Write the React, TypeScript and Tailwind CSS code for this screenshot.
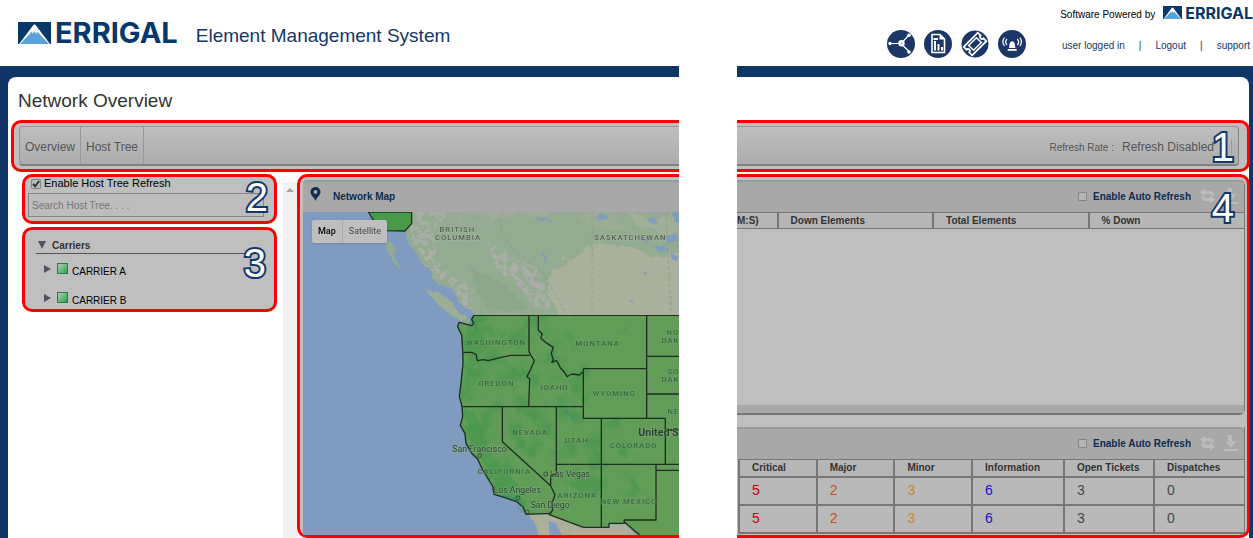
import { useState } from 'react';

interface Carrier {
  name: string;
}

interface AlarmRow {
  critical: number;
  major: number;
  minor: number;
  information: number;
  tickets: number;
  dispatches: number;
}

const carriers: Carrier[] = [{ name: 'CARRIER A' }, { name: 'CARRIER B' }];

const alarmRows: AlarmRow[] = [
  { critical: 5, major: 2, minor: 3, information: 6, tickets: 3, dispatches: 0 },
  { critical: 5, major: 2, minor: 3, information: 6, tickets: 3, dispatches: 0 },
];

function MountainMark({ className }: { className: string }) {
  return (
    <svg className={className} viewBox="0 0 33 22" preserveAspectRatio="none" aria-hidden="true">
      <rect width="33" height="22" fill="#06386b" />
      <path d="M1 22 L15 3.5 Q16.5 1.5 18 3.5 L32 22Z" fill="#fff" />
      <path d="M2 22 L12 11.5 L14 9.5 L14.6 12 L16.5 9 L18.2 12.2 L19 9.5 L21 11.5 L31 22Z" fill="#57a3d9" />
    </svg>
  );
}

function NetworkIcon() {
  return (
    <svg className="size-7" viewBox="0 0 28 28" aria-hidden="true">
      <circle cx="14" cy="14" r="14" fill="#1b3766" />
      <path d="M3 13.5H12M15.5 12L21.5 5.5M15.5 15L22 21.5" stroke="#fff" strokeWidth="1.2" fill="none" />
      <circle cx="14.5" cy="13.3" r="3.2" fill="#fff" />
      <circle cx="14.5" cy="13.3" r="1" fill="#9fb0c9" />
      <circle cx="3" cy="13.5" r="1.7" fill="#fff" />
      <circle cx="22" cy="5.2" r="1.8" fill="#fff" />
      <circle cx="22" cy="22" r="1.8" fill="#fff" />
    </svg>
  );
}

function ReportIcon() {
  return (
    <svg className="size-7" viewBox="0 0 28 28" aria-hidden="true">
      <circle cx="14" cy="14" r="14" fill="#1b3766" />
      <path d="M8 4.5h8l4.500 4.500V22.500H8z" fill="none" stroke="#fff" strokeWidth="1.6" />
      <path d="M15.500 4v5.500H21z" fill="#fff" />
      <path d="M9.500 9H14M11 20.500V11M14.500 20.500V14M18 20.500V17" stroke="#fff" strokeWidth="2" fill="none" />
    </svg>
  );
}

function TicketIcon() {
  return (
    <svg className="size-7" viewBox="0 0 28 28" aria-hidden="true">
      <circle cx="14" cy="14" r="13.5" fill="#1b3766" />
      <g transform="rotate(-45 14 14)" fill="none" stroke="#fff">
        <path d="M4 8h20v4a2 2 0 0 0 0 4v4H4v-4a2 2 0 0 0 0-4z" strokeWidth="1.8" />
        <rect x="8.5" y="10.5" width="11" height="7" strokeWidth="1.4" />
      </g>
    </svg>
  );
}

function AlarmIcon() {
  return (
    <svg className="size-7" viewBox="0 0 28 28" aria-hidden="true">
      <circle cx="14" cy="14" r="14" fill="#1b3766" />
      <path d="M11 18l.8-5a2.500 2.500 0 0 1 4.800 0l.8 5zM9.700 19h9v1.800h-9z" fill="#fff" />
      <g fill="none" stroke="#fff" strokeWidth="1.2">
        <path d="M9 9a4.500 4.500 0 0 0 0 6M6.500 7.500a7 7 0 0 0 0 8.500M19.300 9a4.500 4.500 0 0 1 0 6M21.800 7.500a7 7 0 0 1 0 8.500" />
      </g>
    </svg>
  );
}

function RefreshIcon() {
  return (
    <svg className="h-4 w-[15px]" viewBox="0 0 15 16" aria-hidden="true">
      <path d="M4 4.500H9q3 0 3.500 3M11 11.500H6q-3 0-3.500-3" fill="none" stroke="#bcbcbc" strokeWidth="3" />
      <path d="M0 4.500L5 .5v8zM15 11.500l-5-4v8z" fill="#bcbcbc" />
    </svg>
  );
}

function DownloadIcon() {
  return (
    <svg className="size-4" viewBox="0 0 16 16" fill="#bcbcbc" aria-hidden="true">
      <path d="M4 0h5v6h4.500L8 13 2 6.500h3.500zM1 14h14v2H1z" />
    </svg>
  );
}

function Callout({ n, className }: { n: number; className: string }) {
  return (
    <span
      className={`absolute z-20 text-[40px] leading-8 text-white [-webkit-text-stroke:4px_#12386b] [paint-order:stroke_fill] ${className}`}
    >
      {n}
    </span>
  );
}

function RegionMap() {
  return (
    <svg className="block h-[323px] w-full" viewBox="0 0 1128 969" preserveAspectRatio="xMinYMin slice" role="img" aria-label="Network map">
      <defs>
        <filter id="rough" x="-5%" y="-5%" width="110%" height="110%">
          <feTurbulence type="fractalNoise" baseFrequency="0.03" numOctaves="4" seed="4" />
          <feDisplacementMap in="SourceGraphic" scale="42" />
        </filter>
        <filter id="coast" x="-5%" y="-5%" width="110%" height="110%">
          <feTurbulence type="fractalNoise" baseFrequency="0.05" numOctaves="3" seed="9" />
          <feDisplacementMap in="SourceGraphic" scale="18" />
        </filter>
        <filter id="peaks" x="0" y="0" width="100%" height="100%" colorInterpolationFilters="sRGB">
          <feTurbulence type="fractalNoise" baseFrequency="0.06" numOctaves="4" seed="7" />
          <feColorMatrix values="0 0 0 0 .67  0 0 0 0 .68  0 0 0 0 .66  5 5 0 0 -4.5" />
          <feComposite in2="SourceGraphic" operator="in" />
        </filter>
        <filter id="forest" x="0" y="0" width="100%" height="100%" colorInterpolationFilters="sRGB">
          <feTurbulence type="fractalNoise" baseFrequency="0.018" numOctaves="4" seed="2" />
          <feColorMatrix values="0 0 0 0 .27  0 0 0 0 .58  0 0 0 0 .31  0 4 0 0 -1.8" />
          <feComposite in2="SourceGraphic" operator="in" />
        </filter>
      </defs>
      <rect width="1400" height="969" fill="#7f9bc0" />

      {/* Canada */}
      <g transform="translate(-39 -306)">
        <path
          filter="url(#coast)"
          d="M345 300L348 370L358 405L388 440L402 470L428 480L425 505L450 525L490 535L505 575L530 590L555 615L560 650H1500V280H345Z"
          fill="#93ac91"
        />
        <path filter="url(#coast)" d="M280 392L300 395L318 415L312 440L338 484L318 468L300 435Z" fill="#93ac91" />
        <path filter="url(#coast)" d="M408 540L440 545L485 575L520 600L545 632L530 640L490 620L445 585Z" fill="#9cad98" />
        <g filter="url(#rough)" fill="#a9b09b">
          <path d="M560 280H790L770 320L690 310L600 330Z" opacity=".5" />
          <path d="M790 480L850 440L930 400L1010 410L1090 440L1220 420V640H820L780 560Z" />
          <path d="M1020 310L1100 330L1200 300V400L1120 370L1040 350Z" opacity=".6" />
          <path d="M900 300L970 320L1000 350L940 360L860 330Z" opacity=".4" />
        </g>
        <path filter="url(#peaks)" d="M365 306H480L430 360L440 450L490 500L550 540L545 600L520 590L480 520L430 500L400 440L360 390Z" fill="#fff" />
        <path filter="url(#peaks)" d="M590 390L630 410L660 440L740 470L775 550L785 600L730 590L690 530L620 480Z" fill="#fff" />
        <path filter="url(#peaks)" d="M470 306H640L600 350L500 340Z" fill="#fff" opacity=".3" />
        <path filter="url(#rough)" d="M540 470L640 520L720 600H590L560 540Z" fill="#86a58a" opacity=".6" />
        <g fill="#7f9bc0" filter="url(#coast)">
          <path d="M740 325l40 2v6l-38-2zM755 420l12 22 4 28-8-20zM915 322l30-10 6 8-28 10zM1040 380l40 6-12 12zM1075 330l18-8 10 16-20 4zM1125 380l36-10v20l-28 8zM1150 306h20v34l-14-4zM1060 485l10 4-6 8z" />
          <path d="M1095 410l26-5 10 16-26 2zM1142 430l22 10v14l-18-6zM1015 566l10 4-4 6z" />
          <path d="M490 570l14 22 30 18 18 10-8 8-35-18-20-25z" />
        </g>
        <g stroke="#7d8a7c" strokeWidth="2" strokeDasharray="10 8" fill="none" opacity=".7">
          <path d="M634 306V370L680 430L760 490L800 560L830 612M907 306V612M1128 306L1143 612" />
        </g>
        <path d="M235 306L250 330L280 362L345 363L365 340V306Z" fill="#489a49" stroke="#1c3322" strokeWidth="4" />
      </g>

      <g transform="translate(-39 294)">
        {/* Mexico */}
        <path filter="url(#coast)" d="M712 610L780 610L880 652L1003 638L1050 690H820L800 640L775 635L780 700H755L740 650Z" fill="#aab09a" />
        {/* United States */}
        <path
          d="M552 16H1300V700H1060L1040 672L1003 636V640H957V652H880L778 614L782 610L708 613L700 592L680 575L635 560L612 553L608 528L578 480L563 448L545 430L528 400L525 370L511 346L518 320L516 290L508 260L513 220L519 160L518 122L515 75L503 50L507 37L545 47L551 40L545 28Z"
          fill="#629d58"
        />
        <path
          filter="url(#forest)"
          d="M552 16H820L900 190V320H1010V460L1060 560H900L720 460L640 400L620 300L708 613L612 553L578 480L528 400L511 346L516 290L508 260L518 122L507 37Z"
          fill="#fff"
          opacity=".6"
        />
        <path filter="url(#rough)" d="M525 300L560 310L580 400L640 480L700 540L700 590L630 540L570 440L535 380Z" fill="#4a9a50" opacity=".7" />
        <path filter="url(#rough)" d="M530 50L600 40L590 110L560 180L540 270L520 255L528 125Z" fill="#489950" opacity=".6" />
        <g stroke="#2b8780" strokeWidth="4" fill="none" opacity=".7">
          <path d="M826 300l8 10 12 18M556 30v20l8 10M640 556l40 12 18 14" />
          <path d="M985 70l20-10 12-12" strokeWidth="2" />
        </g>
        <g stroke="#1d2f20" strokeWidth="4" fill="none" strokeLinejoin="round">
          <path d="M1300 16H552L545 28L551 40L545 47L507 37L503 50L515 75L518 122L519 160L513 220L508 260L516 290L518 320L511 346L525 370L528 400L545 430L563 448L578 480L608 528L612 553L635 560L680 575L700 592L708 613L782 610L778 614L880 652H957V640H1003V630H1098V465" />
          <path d="M520 127L545 127L558 133L562 152L580 149L595 152L630 143L662 136H720" />
          <path d="M717 16V125L724 138L733 152L722 178L711 200L719 206L716 290" />
          <path d="M745 16V60L757 72L752 84L768 98L790 112L784 130L790 150L785 157L800 152L812 175L822 185L831 200L845 192L868 195L878 186" />
          <path d="M516 290H880M880 176V325H1126M880 176H1070M1070 16V325M1070 139H1200M1070 252H1200M1126 325V463M1126 360H1200" />
          <path d="M637 290V395L782 527M799 290V492L782 496V527L795 555L786 580L788 600L778 614M799 463H1200M934 325V652M1098 481H1200M1003 630L1003 636L1050 676" />
        </g>
        <path d="M838 16V670" stroke="#72a86d" strokeWidth="2" opacity=".6" />
      </g>

      <g
        className="[font-family:Roboto,'Liberation_Sans',sans-serif] [paint-order:stroke]"
        fontSize="23"
        fontWeight="500"
        letterSpacing="3"
        textAnchor="middle"
        fill="#3a6841"
        stroke="#7aab74"
        strokeOpacity=".4"
        strokeWidth="4"
      >
        <g fill="#565e56" stroke="#b4c0b0">
          <text x="463" y="59">BRITISH</text>
          <text x="465" y="83">COLUMBIA</text>
          <text x="982" y="83">SASKATCHEWAN</text>
        </g>
        <g transform="translate(-39 294)">
          <text x="618" y="105">WASHINGTON</text>
          <text x="923" y="107">MONTANA</text>
          <text x="619" y="229">OREGON</text>
          <text x="794" y="239">IDAHO</text>
          <text x="973" y="258">WYOMING</text>
          <text x="720" y="375">NEVADA</text>
          <text x="860" y="399">UTAH</text>
          <text x="1031" y="413">COLORADO</text>
          <text x="643" y="491">CALIFORNIA</text>
          <text x="862" y="563">ARIZONA</text>
          <text x="1017" y="582">NEW MEXICO</text>
          <g textAnchor="end">
            <text x="1168" y="76">NO</text>
            <text x="1168" y="100">DAK</text>
            <text x="1168" y="191">SO</text>
            <text x="1168" y="215">DAK</text>
            <text x="1168" y="313">NE</text>
          </g>
        </g>
      </g>
      <g
        transform="translate(-39 294)"
        className="[font-family:Roboto,'Liberation_Sans',sans-serif] [paint-order:stroke]"
        fontSize="26"
        fill="#2a4331"
        stroke="#8fb38c"
        strokeOpacity=".5"
        strokeWidth="4"
      >
        <text x="487" y="425">San Francisco</text>
        <text x="780" y="501">Las Vegas</text>
        <text x="611" y="550">Los Angeles</text>
        <text x="722" y="593">San Diego</text>
        <text x="1166" y="378" fontSize="32" fontWeight="700" textAnchor="end">United S</text>
      </g>
      <g transform="translate(-39 294)" fill="none" stroke="#2a4331" strokeWidth="2.5">
        <circle cx="569" cy="437" r="6" />
        <circle cx="767" cy="492" r="6" />
        <circle cx="684" cy="564" r="6" />
        <circle cx="712" cy="606" r="6" />
      </g>
    </svg>
  );
}

function PanelTools({ id }: { id: string }) {
  const [auto, setAuto] = useState(false);
  return (
    <div className="flex h-8 items-center justify-end rounded-tr border-t-2 border-[#9b9b9b] bg-[#a8a8a8] pr-[5px] pb-[2px] text-[10px] font-bold text-[#0d2d52]">
      <input
        id={id}
        type="checkbox"
        checked={auto}
        onChange={e => setAuto(e.target.checked)}
        className="mr-[6px] size-[9px] appearance-none rounded-[1px] border border-[#858585] bg-[#b5b5b5] checked:bg-[#4b4b4b]"
      />
      <label htmlFor={id}>Enable Auto Refresh</label>
      <button type="button" aria-label="Refresh" className="ml-[9px]">
        <RefreshIcon />
      </button>
      <button type="button" aria-label="Download" className="ml-2">
        <DownloadIcon />
      </button>
    </div>
  );
}

function Header() {
  return (
    <header className="flex h-[66px] justify-between bg-white">
      <div className="flex items-center pl-[18px]">
        <MountainMark className="h-[22px] w-[33px]" />
        <span className="ml-1 font-[Inter] text-[29px] leading-8 font-bold text-[#06386b]">ERRIGAL</span>
        <span className="ml-[18px] pt-[6px] text-[19px] text-[#12386b]">Element Management System</span>
      </div>
      <div className="flex">
        <div className="mr-[34px] flex items-center gap-[9px] pt-[22px]">
          <a href="#network" aria-label="Network"><NetworkIcon /></a>
          <a href="#reports" aria-label="Reports"><ReportIcon /></a>
          <a href="#tickets" aria-label="Tickets"><TicketIcon /></a>
          <a href="#alarms" aria-label="Alarms"><AlarmIcon /></a>
        </div>
        <div className="flex flex-col items-end text-[10px]">
          <div className="mt-1 flex h-[18px] items-center text-black">
            <span className="pt-[2px]">Software Powered by</span>
            <MountainMark className="mb-px ml-2 h-[13px] w-[19px]" />
            <span className="ml-[3px] font-[Inter] text-[16px] leading-4 font-bold text-[#06386b]">ERRIGAL</span>
          </div>
          <div className="mt-4 flex gap-[14px] pr-[3px] text-[#12386b]">
            <span>user logged in</span>
            <span>|</span>
            <a href="#logout">Logout</a>
            <span>|</span>
            <a href="#support">support</a>
          </div>
        </div>
      </div>
    </header>
  );
}

function Sidebar() {
  const [treeRefresh, setTreeRefresh] = useState(true);
  const [query, setQuery] = useState('');
  return (
    <aside className="w-[275px] shrink-0 pl-[14px]">
      <div className="relative h-[50px] w-[255px] rounded-[10px] border-3 border-[#f00] bg-[#bfbfbf] px-[3px]">
        <label className="flex h-[13px] items-center gap-[3px] pl-[3px] text-[11px] text-black">
          <span className="relative flex">
            <input
              type="checkbox"
              checked={treeRefresh}
              onChange={e => setTreeRefresh(e.target.checked)}
              className="size-[10px] appearance-none rounded-[1px] border border-[#858585] bg-[#b9b9b9]"
            />
            {treeRefresh && (
              <svg className="pointer-events-none absolute inset-0 size-[10px]" viewBox="0 0 10 10" aria-hidden="true">
                <path d="M2 5l2.200 2.300L8.200 2" stroke="#333" strokeWidth="2" fill="none" />
              </svg>
            )}
          </span>
          Enable Host Tree Refresh
        </label>
        <input
          type="text"
          aria-label="Search Host Tree"
          placeholder="Search Host Tree. . . ."
          value={query}
          onChange={e => setQuery(e.target.value)}
          className="mt-[3px] block h-6 w-[236px] border border-[#858585] bg-[#bdbdbd] px-[3px] text-[10px] outline-none placeholder:text-[#777]"
        />
        <Callout n={2} className="top-1 right-[6px]" />
      </div>

      <div className="relative mt-[3px] h-[85px] w-[255px] rounded-[10px] border-3 border-[#f00] bg-[#bfbfbf] px-[11px] pt-2">
        <button type="button" className="flex h-4 w-full items-center gap-[6px] border-b border-[#555] pb-px pl-[2px] text-[10px] font-bold text-[#333]">
          <svg className="size-2" viewBox="0 0 8 8" aria-hidden="true"><path d="M0 0h8L4 8z" fill="#4f5661" /></svg>
          Carriers
        </button>
        <ul className="flex flex-col">
          {carriers.map(c => (
            <li key={c.name} className="flex h-[29px] items-center pl-2 text-[10px] text-black">
              <svg className="mr-1 size-2" viewBox="0 0 8 8" aria-hidden="true"><path d="M0 0L7 4L0 8z" fill="#4f5661" /></svg>
              <span className="mr-1 ml-px size-[11px] border border-[#2d7a4e] bg-linear-to-br from-[#a9cdb4] to-[#12a54b]" />
              <span className="pt-[6px]">{c.name}</span>
            </li>
          ))}
        </ul>
        <Callout n={3} className="top-[17px] right-[8px]" />
      </div>
    </aside>
  );
}

export default function App() {
  const [mapType, setMapType] = useState('Map');

  return (
    <div className="min-w-[1100px] bg-white font-['Liberation_Sans',Arial,sans-serif]">
      <Header />
      <main className="relative bg-[#0f3667] pt-[11px] pr-1 pl-2">
        <div className="rounded-t-lg bg-white pt-3">
          <h1 className="mb-[7px] pl-[10px] text-[19px] leading-6 text-[#333]">Network Overview</h1>

          <div className="relative -mr-px ml-[3px] rounded-[10px] border-3 border-[#f00] bg-[#bfbfbf] py-[3px] pr-2 pl-[5px]">
            <nav className="flex h-10 rounded-sm border border-b-2 border-[#999] border-r-[#858585] border-b-[#808080] bg-linear-to-b from-[#bebebe] to-[#adadad] text-xs text-[#555]">
              <a href="#overview" className="flex items-center border-r border-[#999] px-[5px] pt-[2px]">Overview</a>
              <a href="#host-tree" className="flex items-center border-r border-[#999] px-[5px] pt-[2px]">Host Tree</a>
              <div className="ml-auto flex items-center pt-[2px] pr-[6px]">
                <label htmlFor="rate" className="mr-2 pt-[2px] text-[10px]">Refresh Rate :</label>
                <select id="rate" className="h-4 w-[110px] appearance-none border-r border-[#a0a0a0] bg-transparent text-xs leading-4">
                  <option>Refresh Disabled</option>
                  <option>30 Seconds</option>
                  <option>1 Minute</option>
                </select>
              </div>
            </nav>
            <Callout n={1} className="top-2 right-[13px]" />
          </div>

          <div className="mt-[2px] flex">
            <Sidebar />
            <div className="mt-2 flex w-[14px] shrink-0 justify-center bg-[#f1f1f1] pt-[6px]">
              <svg className="h-1 w-2" viewBox="0 0 8 4" aria-hidden="true"><path d="M4 0l4 4H0z" fill="#a3a3a3" /></svg>
            </div>

            <div className="relative -mr-px flex min-w-0 flex-1 rounded-[10px] border-3 border-[#f00] bg-[#bfbfbf] pt-[3px] pr-[2px] pl-[3px]">
              <section className="w-[376px] shrink-0">
                <div className="flex h-8 items-center rounded-tl border-t-2 border-[#9b9b9b] bg-[#a8a8a8] pb-[2px] pl-[7px]">
                  <svg className="mb-1 h-[14px] w-[11px]" viewBox="0 0 11 14" aria-hidden="true">
                    <path fillRule="evenodd" d="M5.500 0a5 5 0 0 1 5 5c0 3-3.500 5-5 9c-1.500-4-5-6-5-9a5 5 0 0 1 5-5zM5.500 3a2 2 0 1 0 0 4a2 2 0 0 0 0-4z" fill="#0d2d52" />
                  </svg>
                  <h2 className="ml-3 text-[10px] font-bold text-[#0d2d52]">Network Map</h2>
                </div>
                <div className="relative">
                  <RegionMap />
                  <div className="absolute top-2 left-[9px] flex h-[23px] rounded-xs bg-[#bfbfbf] text-[9px] shadow [font-family:Roboto,sans-serif]">
                    {['Map', 'Satellite'].map(t => (
                      <button
                        key={t}
                        type="button"
                        onClick={() => setMapType(t)}
                        className={`border-r border-[#aaa] px-[6px] last:border-r-0 ${mapType === t ? 'font-medium text-black' : 'text-[#4a4a4a]'}`}
                      >
                        {t}
                      </button>
                    ))}
                  </div>
                </div>
              </section>

              <div className="ml-[58px] flex min-w-0 flex-1 flex-col">
                <section className="flex h-[235px] flex-col rounded-r-md border-r border-b-2 border-[#777]">
                  <PanelTools id="auto-elements" />
                  <table className="w-full table-fixed border-collapse text-[10px] text-[#333]">
                    <colgroup>
                      <col className="w-[8%]" />
                      <col />
                      <col />
                      <col />
                    </colgroup>
                    <thead>
                      <tr className="h-4 border-y border-[#777] bg-[#b6b6b6] text-left leading-[14px]">
                        <th className="border-r-2 border-[#777] p-0">M:S)</th>
                        <th className="border-r-2 border-[#777] p-0 pl-3">Down Elements</th>
                        <th className="border-r-2 border-[#777] p-0 pl-3">Total Elements</th>
                        <th className="p-0 pl-3">% Down</th>
                      </tr>
                    </thead>
                  </table>
                  <div className="mt-auto h-2 bg-[#a8a8a8]" />
                </section>

                <section className="mt-3 border-r border-[#777]">
                  <PanelTools id="auto-alarms" />
                  <div className="pl-px">
                    <table className="w-full table-fixed border-collapse border-l-2 border-[#777] text-[10px] text-[#333]">
                      <colgroup>
                        <col className="w-2/13" />
                        <col className="w-2/13" />
                        <col className="w-2/13" />
                        <col className="w-2/11" />
                        <col />
                        <col />
                      </colgroup>
                      <thead>
                        <tr className="h-[17px] border-t border-b-2 border-[#777] bg-[#b6b6b6] text-left leading-[15px]">
                          {['Critical', 'Major', 'Minor', 'Information', 'Open Tickets', 'Dispatches'].map(h => (
                            <th key={h} className="border-r-2 border-[#777] p-0 pl-3 last:border-r-0">{h}</th>
                          ))}
                        </tr>
                      </thead>
                      <tbody className="text-sm">
                        {alarmRows.map((r, i) => (
                          <tr key={i} className="h-7 border-b-2 border-[#777] bg-[#b9b9b9]">
                            <td className="border-r-2 border-[#777] p-0 pb-[2px] pl-3 text-[#cc0000]">{r.critical}</td>
                            <td className="border-r-2 border-[#777] p-0 pb-[2px] pl-3 text-[#c8501e]">{r.major}</td>
                            <td className="border-r-2 border-[#777] p-0 pb-[2px] pl-3 text-[#c8862a]">{r.minor}</td>
                            <td className="border-r-2 border-[#777] p-0 pb-[2px] pl-3 text-[#1c10cc]">{r.information}</td>
                            <td className="border-r-2 border-[#777] p-0 pb-[2px] pl-3 text-[#4a4a4a]">{r.tickets}</td>
                            <td className="p-0 pb-[2px] pl-3 text-[#4a4a4a]">{r.dispatches}</td>
                          </tr>
                        ))}
                      </tbody>
                    </table>
                  </div>
                </section>
              </div>
              <Callout n={4} className="top-[15px] right-[13px]" />
            </div>
          </div>
        </div>

        {/* torn-out strip between the two halves of the page */}
        <div className="absolute inset-y-0 left-[679px] z-10 w-[58px] bg-white" />
      </main>
    </div>
  );
}
